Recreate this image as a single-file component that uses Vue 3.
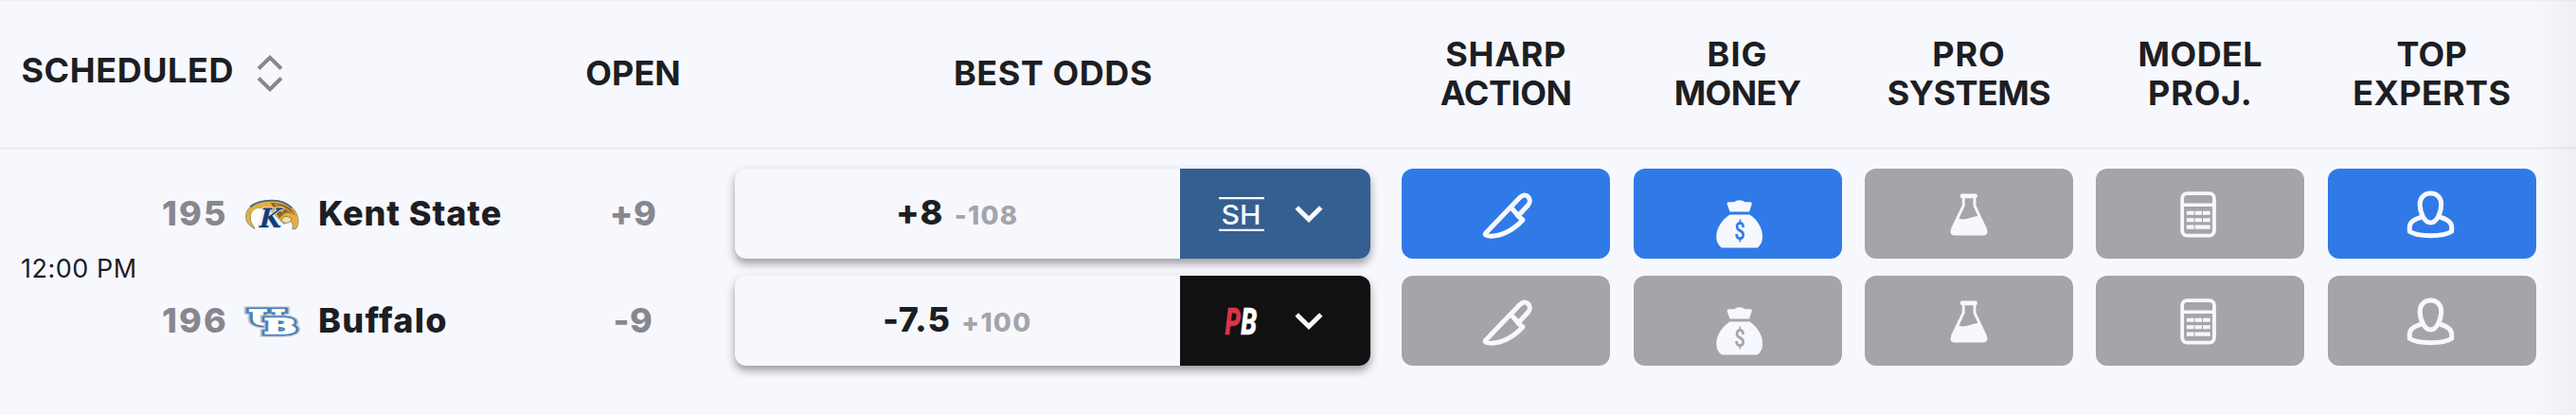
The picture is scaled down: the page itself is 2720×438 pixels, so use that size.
<script setup>
const columns = [
  [['SHARP', 0.7], ['ACTION', -0.4]],
  [['BIG', 1], ['MONEY', -0.6]],
  [['PRO', 0.9], ['SYSTEMS', -0.6]],
  [['MODEL', 0.4], ['PROJ.', 0.8]],
  [['TOP', 0.2], ['EXPERTS', 0.3]],
]

const icons = ['knife', 'bag', 'flask', 'calc', 'expert']

const teams = [
  { rot: '195', name: 'Kent State', logo: 'kent', open: '+9', line: '+8', price: '-108', book: 'sh', active: [0, 1, 4] },
  { rot: '196', name: 'Buffalo', logo: 'buffalo', open: '-9', line: '-7.5', price: '+100', book: 'pb', active: [] },
]

const monogram = [
  { ch: 'U', x: 5, y: 21.5, size: 22, len: 37 },
  { ch: 'B', x: 21, y: 31, size: 23, len: 34 },
]
</script>

<template>
  <main class="board">
    <header class="head">
      <div class="sched">
        <span class="label tight">SCHEDULED</span>
        <svg class="sort" width="28" height="40" viewBox="0 0 28 40">
          <path d="M2 14.500 14 2.800 26 14.500M2 24.500 14 36.200 26 24.500" />
        </svg>
      </div>
      <div class="cell label">OPEN</div>
      <div class="cell label tight">BEST ODDS</div>
      <div v-for="(c, i) in columns" :key="i" class="cell label">
        <div v-for="w in c" :key="w[0]" :style="{ letterSpacing: w[1] + 'px' }">{{ w[0] }}</div>
      </div>
    </header>

    <section class="game">
      <div class="time">12:00 PM</div>
      <div class="rows">
        <div v-for="t in teams" :key="t.rot" class="row">
          <div class="team">
            <span class="rot">{{ t.rot }}</span>
            <svg v-if="t.logo === 'kent'" class="logo" width="60" height="36" viewBox="0 0 60 36">
              <g transform="translate(0 1.500)">
                <path d="M1.500 20C1 9 13 2 28 2.200C44 2 54 9 56.500 20C57.500 25 57 29 54 32.500L50.500 32C52 28 51 25 47 23L42 27 37 22 28 13 16 10C8 12 5 17 7 24L11 32C5 29 2 25 1.500 20Z" fill="#e6ae3c" stroke="#8d9488" stroke-width="1" />
                <path d="M6 9C13 3 21 2 30 2.200C39 2.300 45 5 50 10" fill="none" stroke="#48688b" stroke-width="1.800" />
                <path d="M28 4.500C40 5 50 8 54 18C48 15 45 14 42 16L37 21 31 11Z" fill="#8a6828" />
                <path d="M32 6 44 11 53 17M30 9 41 14" fill="none" stroke="#d09c38" stroke-width="1.500" />
                <path d="M8 15C10 11 15 9 19 11L13 32C7 27 6 20 8 15Z" fill="#fff" />
                <path d="M39 24C40 18 45 18 50 21L48 25 43 26Z" fill="#f2dfaa" stroke="#78705a" stroke-width=".8" />
              </g>
              <g transform="translate(14 32) skewX(-13)" class="kent-k">
                <text class="rim" textLength="23" lengthAdjust="spacingAndGlyphs">K</text>
              </g>
            </svg>
            <svg v-else class="logo" width="60" height="36" viewBox="0 0 60 36">
              <g v-for="m in monogram" :key="m.ch" class="mono" :font-size="m.size">
                <text v-for="layer in ['grey', 'blue', 'white']" :key="layer" :class="layer" :x="m.x" :y="m.y" :textLength="m.len" lengthAdjust="spacingAndGlyphs">{{ m.ch }}</text>
              </g>
            </svg>
            <span class="name" :class="t.logo">{{ t.name }}</span>
          </div>
          <div class="open">{{ t.open }}</div>
          <div class="odds">
            <div class="pill">
              <div class="quote">
                <span class="line">{{ t.line }}</span>
                <span class="price">{{ t.price }}</span>
              </div>
              <div class="book" :class="t.book">
                <svg v-if="t.book === 'sh'" width="48" height="36" viewBox="0 0 48 36">
                  <path d="M0 1.200H48M0 34.800H48" stroke="#f7f8fe" stroke-width="2.200" />
                  <text x="2.500" y="28.500" class="sh-text" textLength="42" lengthAdjust="spacingAndGlyphs">SH</text>
                </svg>
                <svg v-else width="48" height="36" viewBox="0 0 48 36">
                  <text x="6.500" y="31.500" class="pb-text" fill="#dc3349" stroke="#dc3349" textLength="16.500" lengthAdjust="spacingAndGlyphs">P</text>
                  <text x="23.200" y="31.500" class="pb-text" fill="#fff" stroke="#fff" textLength="17" lengthAdjust="spacingAndGlyphs">B</text>
                </svg>
                <svg class="chev" width="30" height="20" viewBox="0 0 30 20">
                  <path d="M2.200 3 15 15.500 27.800 3" />
                </svg>
              </div>
            </div>
          </div>
          <div v-for="(icon, i) in icons" :key="icon" class="slot">
            <div class="tile" :class="{ on: t.active.includes(i) }">
              <svg width="60" height="60" viewBox="0 0 60 60">
                <g v-if="icon === 'knife'" class="stroke">
                  <path d="M8.800 50 45 12.300C47.500 9.500 51.500 9.200 53.800 11.800C56 14.500 55.600 18 53.500 20.500L42.800 32 48 36C38 47 25 53.500 14.500 53.200C9 53 7 51.800 8.800 50Z" />
                  <path d="M35.500 23 43 31.500" />
                </g>
                <g v-else-if="icon === 'bag'">
                  <path d="M18.700 19.500C18.400 18 19 17.300 20.500 17.300H26C29.500 14.500 34 14.500 37.500 17.300H43C44.500 17.300 45 18 44.700 19.500L42 27.500H21.500Z" />
                  <path d="M21.500 30.500H42.500C51 36 56 45 56 53.500C56 59 54.500 62.500 50.500 65.500H13C9 62.500 7.300 59 7.300 53.500C7.300 45 13 36 21.500 30.500Z" />
                  <text x="31.900" y="56.600" class="dollar" textLength="11.500" lengthAdjust="spacingAndGlyphs" text-anchor="middle">$</text>
                </g>
                <g v-else-if="icon === 'flask'">
                  <rect x="20.800" y="8.500" width="18" height="4.700" rx="2" />
                  <path d="M24.200 11V21.200L12.300 46M36 11V21.200L47.700 46" fill="none" stroke-width="2.900" class="thin" />
                  <path d="M19 34.300C25 37.500 31 33.500 40 31.800L48.500 45.500C51 49.500 48.500 52.500 45.500 52.500H14.500C11.500 52.500 9 49.500 11.500 45.500Z" />
                </g>
                <g v-else-if="icon === 'calc'" transform="translate(-1.200 4.100)">
                  <rect x="12.400" y="4.100" width="33.800" height="44.400" rx="5" fill="none" class="thin" stroke-width="3.800" />
                  <path d="M12 16.200H46" class="thin" stroke-width="3.600" />
                  <path d="M17.100 22.700h7.700v4h-7.700zM25.800 22.700h7.400v4h-7.400zM34.200 22.700h7.700v4h-7.700zM17.100 30.100h7.700v4h-7.700zM25.800 30.100h7.400v4h-7.400zM34.200 30.100h7.700v4h-7.700zM17.100 37.400h7.700v4.200h-7.700zM25.800 37.400h16.100v4.200h-16.100z" />
                </g>
                <g v-else class="stroke">
                  <path d="M28.400 8C35 8 40 12.500 39.700 20C39.400 29 35 39 28.400 39C22 39 17.500 29 17.200 20C17 12.500 22 8 28.400 8Z" />
                  <path d="M18.600 33.200C11 35.500 6.300 39 6.300 43.500V48.300C15 54.200 42 54.200 50.700 48.300V43.500C50.700 39 46 35.500 38.200 33.200" />
                </g>
              </svg>
            </div>
          </div>
        </div>
      </div>
    </section>
    <div class="edge"></div>
  </main>
</template>

<style>
html,
body {
  margin: 0;
  background: #f7f8fe;
}
</style>

<style scoped>
.board {
  position: relative;
  box-sizing: border-box;
  width: 2720px;
  height: 438px;
  overflow: hidden;
  background: #f7f8fe;
  color: #1d1e23;
  font-family: Inter, sans-serif;
}
.head {
  box-sizing: border-box;
  display: grid;
  grid-template-columns: 581px 175px 712px repeat(5, 244.4px) 1fr;
  height: 158px;
  border-top: 1px solid #eeeff4;
  border-bottom: 3px solid #eeeff4;
  align-items: center;
}
.label {
  font-size: 36px;
  font-weight: 700;
  line-height: 41px;
  white-space: nowrap;
}
.tight {
  letter-spacing: 0.55px;
}
.sched {
  display: flex;
  align-items: center;
  padding: 0 0 8px 22.5px;
}
.sort {
  margin: 8px 0 0 24px;
  fill: none;
  stroke: #88878d;
  stroke-width: 4;
}
.cell {
  text-align: center;
  padding-bottom: 1px;
}
.game {
  display: flex;
  align-items: center;
  padding-top: 20px;
}
.time {
  width: 171px;
  box-sizing: border-box;
  padding: 3px 0 0 22px;
  font-size: 27px;
  letter-spacing: 0.5px;
  line-height: 32px;
  white-space: nowrap;
}
.rows {
  display: flex;
  flex-direction: column;
  gap: 18px;
}
.row {
  display: grid;
  grid-template-columns: 410px 175px 712px repeat(5, 244.4px);
  height: 95px;
  align-items: center;
}
.team {
  display: flex;
  align-items: center;
  font-size: 36px;
  font-weight: 800;
  line-height: 44px;
  white-space: nowrap;
}
.rot {
  width: 87px;
  margin-top: -1px;
  letter-spacing: 2.1px;
  color: #88878d;
}
.logo {
  flex: none;
  margin-right: 18px;
  overflow: visible;
}
.name {
  margin-top: -1px;
}
.name.kent {
  letter-spacing: 0.9px;
}
.name.buffalo {
  letter-spacing: 1.3px;
}
.open {
  text-align: center;
  margin-top: -1px;
  font-size: 36px;
  font-weight: 800;
  letter-spacing: 0.6px;
  color: #88878d;
}
.odds {
  display: flex;
  justify-content: center;
  padding-right: 1px;
}
.pill {
  display: flex;
  width: 671px;
  height: 95px;
  border-radius: 12px;
  background: #f7f8fe;
  box-shadow: 0 5px 10px rgba(30, 22, 32, 0.42);
}
.quote {
  display: flex;
  width: 469.5px;
  align-items: baseline;
  justify-content: center;
  gap: 11.5px;
  line-height: 93px;
}
.line {
  font-size: 36px;
  font-weight: 800;
  letter-spacing: 0.8px;
}
.price {
  font-size: 27.5px;
  font-weight: 800;
  letter-spacing: 1.3px;
  color: #a5a4a9;
}
.book {
  display: flex;
  flex: 1;
  align-items: center;
  padding-left: 41px;
  gap: 32px;
  border-radius: 0 12px 12px 0;
}
.book svg {
  overflow: visible;
}
.sh {
  background: #355f90;
}
.pb {
  background: #111;
}
.chev {
  fill: none;
  stroke: #f7f8fe;
  stroke-width: 5;
}
.sh-text {
  font: 500 29px Inter, sans-serif;
  fill: #f7f8fe;
}
.pb-text {
  font: italic 900 38px Roboto, sans-serif;
  stroke-width: 0.3;
}
.kent-k text {
  font: 700 28px 'DejaVu Serif', serif;
  fill: #123d78;
  stroke: #dfe3d8;
  stroke-width: 2;
  paint-order: stroke;
}
.mono text {
  font-family: 'DejaVu Serif', serif;
  font-weight: 700;
}
.mono .grey {
  fill: #c3c5ca;
  stroke: #c3c5ca;
  stroke-width: 7;
}
.mono .blue {
  fill: #4a80b8;
  stroke: #4a80b8;
  stroke-width: 5;
}
.mono .white {
  fill: #fff;
  stroke: #fff;
  stroke-width: 1.6;
}
.slot {
  display: flex;
  justify-content: center;
}
.tile {
  display: flex;
  width: 220px;
  height: 95px;
  align-items: center;
  justify-content: center;
  border-radius: 12px;
  background: #a5a4a9;
  color: #a5a4a9;
}
.tile.on {
  background: #307ae8;
  color: #307ae8;
}
.tile svg {
  fill: #f7f8fe;
  overflow: visible;
}
.tile .stroke {
  fill: none;
  stroke: #f7f8fe;
  stroke-width: 5;
  stroke-linejoin: round;
}
.thin {
  stroke: #f7f8fe;
}
.dollar {
  font: 600 25px Roboto, sans-serif;
  fill: currentColor;
}
.edge {
  position: absolute;
  top: 0;
  right: 0;
  width: 44px;
  height: 438px;
  background: linear-gradient(to right, rgba(30, 25, 35, 0), rgba(30, 25, 35, 0.04));
}
</style>
